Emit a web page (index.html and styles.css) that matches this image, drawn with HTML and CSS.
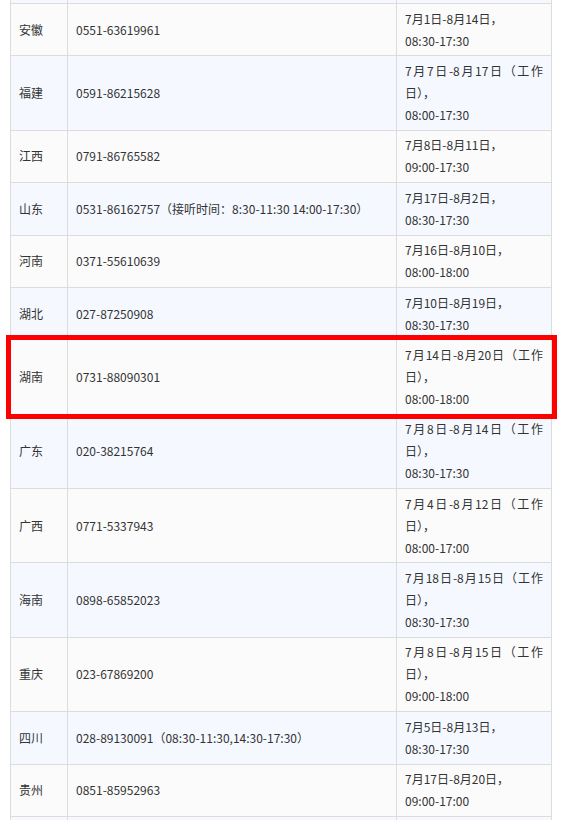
FILE: index.html
```html
<!DOCTYPE html>
<html>
<head>
    <meta charset="utf-8">
    <title>各省咨询电话</title>
    <link rel="stylesheet" href="styles.css">
</head>
<body>
    <table class="contacts">
        <colgroup>
            <col class="col-area">
            <col class="col-phone">
            <col class="col-time">
        </colgroup>
        <tbody>
            <tr class="cut">
                <td></td>
                <td></td>
                <td></td>
            </tr>
            <tr>
                <td>安徽</td>
                <td>0551-63619961</td>
                <td class="time">7月1日-8月14日，<br>08:30-17:30</td>
            </tr>
            <tr>
                <td>福建</td>
                <td>0591-86215628</td>
                <td class="time">7月7日-8月17日（工作日），<br>08:00-17:30</td>
            </tr>
            <tr>
                <td>江西</td>
                <td>0791-86765582</td>
                <td class="time">7月8日-8月11日，<br>09:00-17:30</td>
            </tr>
            <tr>
                <td>山东</td>
                <td>0531-86162757（接听时间：8:30-11:30 14:00-17:30）</td>
                <td class="time">7月17日-8月2日，<br>08:30-17:30</td>
            </tr>
            <tr>
                <td>河南</td>
                <td>0371-55610639</td>
                <td class="time">7月16日-8月10日，<br>08:00-18:00</td>
            </tr>
            <tr>
                <td>湖北</td>
                <td>027-87250908</td>
                <td class="time">7月10日-8月19日，<br>08:30-17:30</td>
            </tr>
            <tr class="marked">
                <td>湖南</td>
                <td>0731-88090301</td>
                <td class="time">7月14日-8月20日（工作日），<br>08:00-18:00</td>
            </tr>
            <tr>
                <td>广东</td>
                <td>020-38215764</td>
                <td class="time">7月8日-8月14日（工作日），<br>08:30-17:30</td>
            </tr>
            <tr>
                <td>广西</td>
                <td>0771-5337943</td>
                <td class="time">7月4日-8月12日（工作日），<br>08:00-17:00</td>
            </tr>
            <tr>
                <td>海南</td>
                <td>0898-65852023</td>
                <td class="time">7月18日-8月15日（工作日），<br>08:30-17:30</td>
            </tr>
            <tr>
                <td>重庆</td>
                <td>023-67869200</td>
                <td class="time">7月8日-8月15日（工作日），<br>09:00-18:00</td>
            </tr>
            <tr>
                <td>四川</td>
                <td>028-89130091（08:30-11:30,14:30-17:30）</td>
                <td class="time">7月5日-8月13日，<br>08:30-17:30</td>
            </tr>
            <tr>
                <td>贵州</td>
                <td>0851-85952963</td>
                <td class="time">7月17日-8月20日，<br>09:00-17:00</td>
            </tr>
            <tr class="cut">
                <td></td>
                <td></td>
                <td></td>
            </tr>
        </tbody>
    </table>
</body>
</html>
```

FILE: styles.css
```css
body {
    margin: 0;
    background: #fff;
    font-family: "Noto Sans CJK SC", "Noto Sans", sans-serif;
    font-size: 12px;
    color: #333;
}
.contacts {
    width: 541px;
    margin: -1px 0 0 10px;
    border-collapse: collapse;
    table-layout: fixed;
}
.col-area { width: 57px; }
.col-phone { width: 329px; }
.col-time { width: 155px; }
.contacts td {
    border: 1px solid #dcdcdc;
    padding: 3.7px 8px;
    line-height: 22px;
    vertical-align: middle;
    text-align: left;
}
.contacts tr:nth-child(odd) { background-color: #f5f9ff; }
.contacts tr:nth-child(even) { background-color: #fbfbfb; }
.contacts td.time {
    text-align: justify;
}
.contacts tr.cut td {
    height: 3px;
    padding: 0;
    line-height: 0;
}
.marked {
    outline: 5px solid #ff0000;
}
```
